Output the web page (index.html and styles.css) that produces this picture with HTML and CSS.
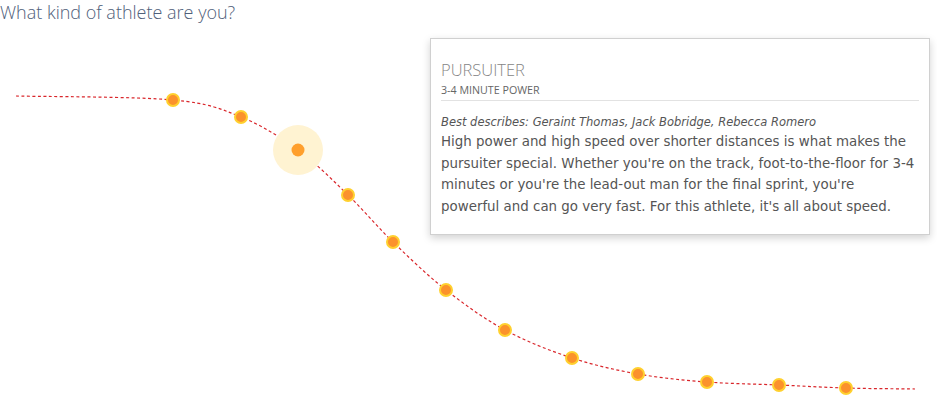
FILE: index.html
```html
<!DOCTYPE html>
<html>
<head>
<meta charset="utf-8">
<link rel="stylesheet" href="styles.css">
</head>
<body>
<h1 class="title">What kind of athlete are you?</h1>
<div class="chart">
  <svg class="curve" width="937" height="391" viewBox="0 24 937 391">
    <path class="line" d="M16,96 C42.2,96.7 135.5,96.5 173,100 C210.5,103.5 220.2,108.7 241,117 C261.8,125.3 280.2,137 298,150 C315.8,163 332.2,179.7 348,195 C363.8,210.3 376.7,226.2 393,242 C409.3,257.8 427.3,275.3 446,290 C464.7,304.7 484,318.7 505,330 C526,341.3 549.8,350.7 572,358 C594.2,365.3 615.5,370 638,374 C660.5,378 683.5,380.2 707,382 C730.5,383.8 755.8,384 779,385 C802.2,386 823.3,387.3 846,388 C868.7,388.7 903.5,388.8 915,389"/>
    <circle class="halo" cx="298" cy="150" r="25"/>
    <circle class="dot" cx="173" cy="100" r="6"/>
    <circle class="dot" cx="241" cy="117" r="6"/>
    <circle class="dot active" cx="298" cy="150" r="6.5"/>
    <circle class="dot" cx="348" cy="195" r="6"/>
    <circle class="dot" cx="393" cy="242" r="6"/>
    <circle class="dot" cx="446" cy="290" r="6"/>
    <circle class="dot" cx="505" cy="330" r="6"/>
    <circle class="dot" cx="572" cy="358" r="6"/>
    <circle class="dot" cx="638" cy="374" r="6"/>
    <circle class="dot" cx="707" cy="382" r="6"/>
    <circle class="dot" cx="779" cy="385" r="6"/>
    <circle class="dot" cx="846" cy="388" r="6"/>
  </svg>
  <div class="tooltip">
    <div class="tip-name">PURSUITER</div>
    <div class="tip-sub">3-4 MINUTE POWER</div>
    <div class="tip-best">Best describes: Geraint Thomas, Jack Bobridge, Rebecca Romero</div>
    <p class="tip-text">High power and high speed over shorter distances is what makes the pursuiter special. Whether you're on the track, foot-to-the-floor for 3-4 minutes or you're the lead-out man for the final sprint, you're<br>powerful and can go very fast. For this athlete, it's all about speed.</p>
  </div>
</div>
</body>
</html>
```
FILE: styles.css
```css
html, body {
  margin: 0;
  padding: 0;
  background: #fff;
}
body {
  width: 937px;
  height: 415px;
  overflow: hidden;
  font-family: "Open Sans", sans-serif;
}
.title {
  margin: 0;
  font-family: "Open Sans", sans-serif;
  font-weight: 300;
  font-size: 18px;
  line-height: 24px;
  color: #4f607a;
}
.chart {
  position: relative;
  width: 937px;
  height: 391px;
}
.curve {
  display: block;
}
.line {
  fill: none;
  stroke: #d9262b;
  stroke-width: 1.2;
  stroke-dasharray: 3 2.5;
}
.halo {
  fill: #fff3d2;
}
.dot {
  fill: #fb922c;
  stroke: #ffd02e;
  stroke-width: 2;
}
.dot.active {
  fill: #ff9f2d;
  stroke: none;
}
.tooltip {
  position: absolute;
  left: 430px;
  top: 14px;
  width: 478px;
  height: 174px;
  padding: 21px 10px 0 10px;
  background: #fff;
  border: 1px solid #d0d0d0;
  box-shadow: 0 3px 8px rgba(0,0,0,0.18);
}
.tip-name {
  font-weight: 300;
  font-size: 16.5px;
  line-height: 20px;
  color: #858585;
}
.tip-sub {
  margin-top: 3px;
  font-size: 10.7px;
  line-height: 14px;
  color: #666;
  padding-bottom: 3px;
  border-bottom: 1px solid #e2e2e2;
}
.tip-best {
  margin-top: 12px;
  font-family: "DejaVu Sans", sans-serif;
  font-style: italic;
  font-size: 11.5px;
  line-height: 18px;
  color: #555;
}
.tip-text {
  margin: 0;
  font-family: "DejaVu Sans", sans-serif;
  font-size: 13.4px;
  line-height: 21.5px;
  color: #555;
}
```
